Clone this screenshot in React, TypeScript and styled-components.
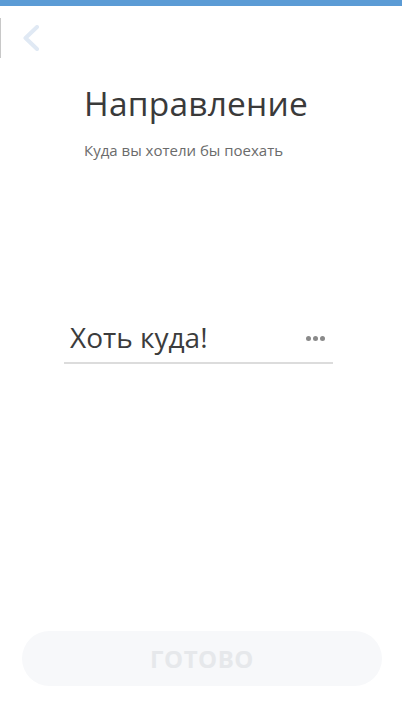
import styled, { createGlobalStyle } from 'styled-components'

const GlobalStyle = createGlobalStyle`
  html, body {
    margin: 0;
    padding: 0;
    background: #ffffff;
  }
  body {
    font-family: 'Open Sans', 'Noto Sans', sans-serif;
  }
`;

const Screen = styled.div`
  width: 402px;
  height: 715px;
  display: flex;
  flex-direction: column;
  background: #fff;
  overflow: hidden;
`;

const TopBar = styled.div`
  height: 6px;
  background: #5b9bd5;
`;

const NavRow = styled.div`
  height: 52px;
  margin-top: 6px;
  display: flex;
  align-items: center;
  gap: 21px;
`;

const EdgeLine = styled.div`
  width: 1px;
  height: 40px;
  background: #c8c8c8;
`;

const BackButton = styled.button`
  border: none;
  background: none;
  padding: 0;
  width: 20px;
  height: 30px;
  display: flex;
  align-items: center;
  cursor: pointer;
`;

const Heading = styled.div`
  padding-left: 84px;
  margin-top: 16px;

  h1 {
    margin: 0;
    font-size: 33.5px;
    font-weight: 400;
    line-height: 46px;
    color: #3a3a3a;
    letter-spacing: 0.2px;
  }

  p {
    margin: 14px 0 0;
    font-size: 15px;
    line-height: 20px;
    color: #6b6b6b;
  }
`;

const Field = styled.div`
  margin: 158px 0 0 64px;
  width: 269px;
  display: flex;
  align-items: center;
  justify-content: space-between;
  border-bottom: 2px solid #dcdcdc;
  padding: 0 8px 6px 6px;
  box-sizing: border-box;
`;

const FieldValue = styled.span`
  font-size: 28px;
  line-height: 38px;
  color: #3c3c3c;
`;

const MoreDots = styled.span`
  display: flex;
  gap: 2px;
  margin-top: 2px;
  span {
    width: 5px;
    height: 5px;
    border-radius: 50%;
    background: #8a8a8a;
  }
`;

const Spacer = styled.div`
  flex: 1;
`;

const DoneButton = styled.button`
  margin: 0 20px 29px 22px;
  height: 55px;
  border: none;
  border-radius: 28px;
  background: #f7f8fa;
  color: #e6e8eb;
  font-family: 'Open Sans', 'Noto Sans', sans-serif;
  font-size: 24px;
  font-weight: 700;
  letter-spacing: 0.5px;
`;

export default function App() {
  return (
    <>
      <GlobalStyle />
      <Screen>
        <TopBar />
        <NavRow>
          <EdgeLine />
          <BackButton aria-label="Назад">
            <svg width="18" height="26" viewBox="0 0 18 26">
              <path d="M15 2 L3.5 13 L15 24" fill="none" stroke="#e0e9f4" strokeWidth="4" strokeLinecap="round" strokeLinejoin="round" />
            </svg>
          </BackButton>
        </NavRow>
        <Heading>
          <h1>Направление</h1>
          <p>Куда вы хотели бы поехать</p>
        </Heading>
        <Field>
          <FieldValue>Хоть куда!</FieldValue>
          <MoreDots><span /><span /><span /></MoreDots>
        </Field>
        <Spacer />
        <DoneButton>ГОТОВО</DoneButton>
      </Screen>
    </>
  )
}
